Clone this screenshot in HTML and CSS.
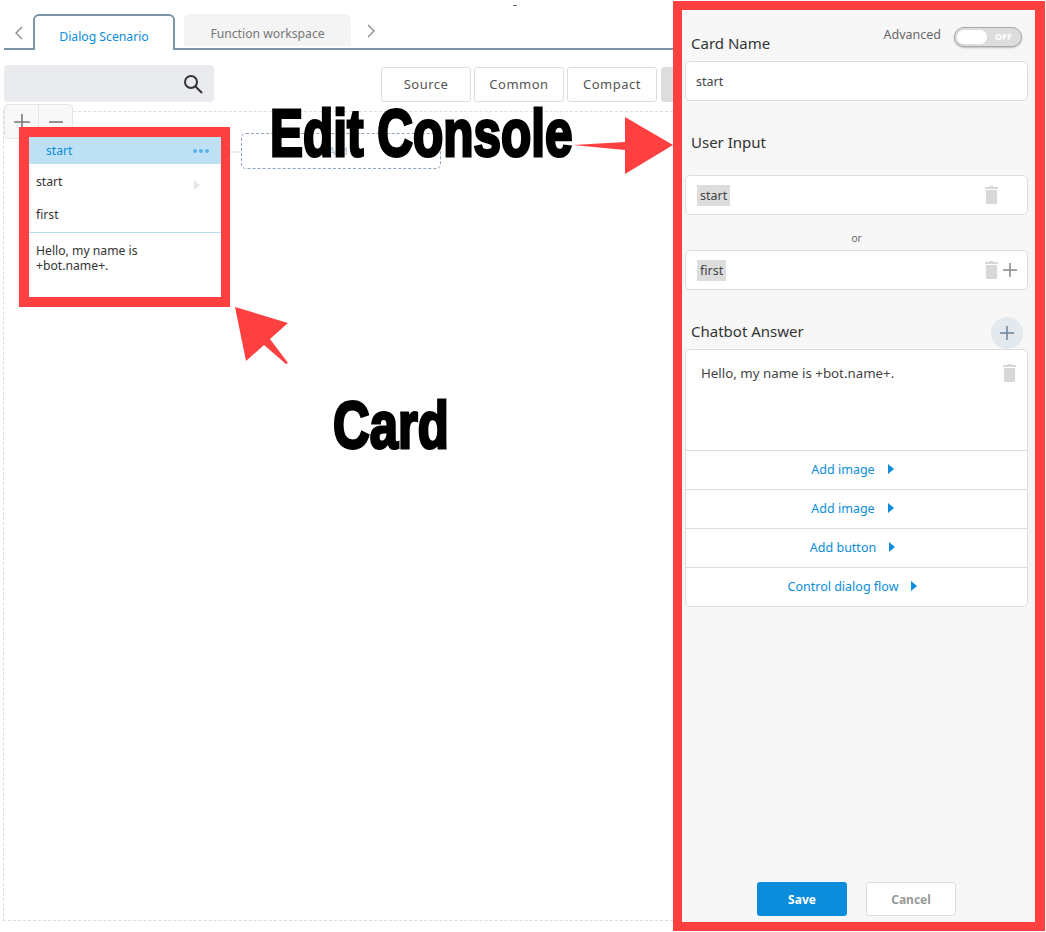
FILE: index.html
```html
<!DOCTYPE html>
<html lang="en">
<head>
    <meta charset="UTF-8">
    <title>Dialog Scenario</title>
    <link rel="stylesheet" href="styles.css">
</head>
<body>
    <div class="page">
        <div class="workspace">
            <div class="tabs">
                <svg class="chevron" width="10" height="16" viewBox="0 0 10 16"><path d="M8 2 2 8l6 6"/></svg>
                <div class="tab tab-active">Dialog Scenario</div>
                <div class="tab">Function workspace</div>
                <svg class="chevron chevron-next" width="10" height="16" viewBox="0 0 10 16"><path d="M2 2l6 6-6 6"/></svg>
            </div>

            <div class="toolbar">
                <div class="search">
                    <svg width="20" height="20" viewBox="0 0 20 20"><circle cx="8" cy="8" r="6"/><path d="M12.5 12.5 19 19"/></svg>
                </div>
                <div class="view-buttons">
                    <button class="view-btn">Source</button>
                    <button class="view-btn">Common</button>
                    <button class="view-btn">Compact</button>
                    <button class="view-btn view-btn-on"></button>
                </div>
            </div>

            <div class="canvas">
                <div class="zoom-ctrl">
                    <span class="zoom-btn"><svg width="16" height="16" viewBox="0 0 16 16"><path d="M8 0v16M0 8h16"/></svg></span>
                    <span class="zoom-btn"><svg width="16" height="16" viewBox="0 0 16 16"><path d="M1 8h14"/></svg></span>
                </div>

                <div class="link-line"></div>
                <div class="add-card">Add</div>

                <div class="card">
                    <div class="card-head">
                        <span>start</span>
                        <span class="dots"><i></i><i></i><i></i></span>
                    </div>
                    <div class="card-inputs">
                        <div class="card-input">start <span class="mini-arrow"></span></div>
                        <div class="card-input">first</div>
                    </div>
                    <div class="card-answer">Hello, my name is<br>+bot.name+.</div>
                </div>
            </div>
        </div>

        <div class="console">
            <div class="name-row">
                <h3>Card Name</h3>
                <div class="advanced">
                    <span class="advanced-label">Advanced</span>
                    <span class="toggle"><i class="knob"></i><b>OFF</b></span>
                </div>
            </div>
            <div class="field">start</div>

            <h3 class="input-title">User Input</h3>
            <div class="field field-input">
                <span class="tag">start</span>
                <svg class="trash" width="13" height="18" viewBox="0 0 14 18" preserveAspectRatio="none"><path d="M5 0h4v1h5v2H0V1h5zM1 4h12v12.500a1.500 1.500 0 0 1-1.500 1.500h-9A1.500 1.500 0 0 1 1 16.500z"/></svg>
            </div>
            <div class="or">or</div>
            <div class="field field-input">
                <span class="tag">first</span>
                <svg class="trash" width="13" height="18" viewBox="0 0 14 18" preserveAspectRatio="none"><path d="M5 0h4v1h5v2H0V1h5zM1 4h12v12.500a1.500 1.500 0 0 1-1.500 1.500h-9A1.500 1.500 0 0 1 1 16.500z"/></svg>
                <svg class="plus" width="14" height="14" viewBox="0 0 14 14"><path d="M7 0v14M0 7h14"/></svg>
            </div>

            <div class="answer-title">
                <h3>Chatbot Answer</h3>
                <span class="round-plus"><svg class="plus" width="14" height="14" viewBox="0 0 14 14"><path d="M7 0v14M0 7h14"/></svg></span>
            </div>
            <div class="answer-box">
                <div class="answer-text">
                    Hello, my name is +bot.name+.
                    <svg class="trash" width="13" height="18" viewBox="0 0 14 18" preserveAspectRatio="none"><path d="M5 0h4v1h5v2H0V1h5zM1 4h12v12.500a1.500 1.500 0 0 1-1.500 1.500h-9A1.500 1.500 0 0 1 1 16.500z"/></svg>
                </div>
                <div class="answer-row">Add image <i class="tri"></i></div>
                <div class="answer-row">Add image <i class="tri"></i></div>
                <div class="answer-row">Add button <i class="tri"></i></div>
                <div class="answer-row">Control dialog flow <i class="tri"></i></div>
            </div>

            <div class="actions">
                <button class="btn-save">Save</button>
                <button class="btn-cancel">Cancel</button>
            </div>
        </div>

        <!-- annotations drawn on top of the screenshot -->
        <span class="top-mark"></span>
        <svg class="arrows" width="1046" height="932" viewBox="0 0 1046 932">
            <path d="M573 145 625 142V117L673 145 625 174V150z"/>
            <path d="M235 307 288 323 270 339 288 363 286 364 264 345 246 361z"/>
        </svg>
        <div class="note note-console">Edit Console</div>
        <div class="note note-card">Card</div>
    </div>
</body>
</html>
```

FILE: styles.css
```css
* {
    box-sizing: border-box;
}
body {
    margin: 0;
    font-family: "Noto Sans", "Open Sans", sans-serif;
    color: #333;
    background: #fff;
}
h3 {
    margin: 0;
    font-size: 15px;
    font-weight: 400;
    line-height: 20px;
    color: #333;
}
button {
    font-family: inherit;
}

.page {
    position: relative;
    display: flex;
    width: 1046px;
    height: 932px;
    overflow: hidden;
}

/* left side */
.workspace {
    width: 673px;
    flex: none;
}
.tabs {
    display: flex;
    align-items: flex-end;
    height: 50px;
    margin-left: 4px;
    padding-top: 14px;
    border-bottom: 2px solid #7a94a8;
}
.chevron {
    align-self: center;
    margin: 4px 9px 0 10px;
    fill: none;
    stroke: #888;
    stroke-width: 1.3;
}
.chevron-next {
    margin: 0 0 0 15px;
}
.tab {
    width: 167px;
    height: 32px;
    margin: 0 0 2px 9px;
    padding-top: 11px;
    background: #f4f4f4;
    border-radius: 6px 6px 0 0;
    text-align: center;
    font-size: 12.2px;
    color: #777;
}
.tab-active {
    position: relative;
    width: 142px;
    height: 36px;
    margin: 0 0 -2px 0;
    padding-top: 12px;
    background: #fff;
    border: 2px solid #7a94a8;
    border-bottom: 0;
    color: #0b8ddb;
}

.toolbar {
    display: flex;
    justify-content: space-between;
    height: 61px;
    padding: 15px 0 0 4px;
}
.search {
    display: flex;
    align-items: center;
    justify-content: flex-end;
    width: 210px;
    height: 37px;
    padding-right: 11px;
    background: #e9ebef;
    border-radius: 4px;
}
.search svg {
    fill: none;
    stroke: #333;
    stroke-width: 2;
}
.view-buttons {
    display: flex;
    gap: 3px;
    padding-top: 2px;
}
.view-btn {
    width: 90px;
    height: 35px;
    padding: 0 0 2px;
    background: #fff;
    border: 1px solid #ddd;
    border-radius: 3px;
    font-size: 13px;
    letter-spacing: 0.5px;
    color: #555;
}
.view-btn-on {
    width: 12px;
    margin-left: 1px;
    background: #ddd;
    border-radius: 3px 0 0 3px;
}

.canvas {
    position: relative;
    height: 810px;
    margin-left: 3px;
    border: 1px dashed #ddd;
    border-right: 0;
}
.zoom-ctrl {
    position: absolute;
    left: 0;
    top: -8px;
    display: flex;
    width: 69px;
    height: 35px;
    background: #f8f8f8;
    border: 1px solid #e5e5e5;
    border-radius: 4px;
}
.zoom-btn {
    flex: 1;
    padding-top: 8px;
    text-align: center;
}
.zoom-btn svg {
    fill: none;
    stroke: #777;
    stroke-width: 1.6;
}
.zoom-btn + .zoom-btn {
    border-left: 1px solid #e5e5e5;
}
.link-line {
    position: absolute;
    left: 226px;
    top: 39px;
    width: 12px;
    height: 2px;
    background: #eee;
}
.add-card {
    position: absolute;
    left: 237px;
    top: 21px;
    width: 200px;
    height: 36px;
    padding: 10px 6px 0 0;
    border: 1px dashed #8fa5bd;
    border-radius: 5px;
    text-align: center;
    font-size: 10px;
    color: #a9bbd0;
}
.card {
    position: absolute;
    left: 15px;
    top: 15px;
    width: 211px;
    height: 180px;
    background: #fff;
    border: 10px solid #ff4040;
    border-right-width: 9px;
    font-size: 12.2px;
    color: #333;
}
.card-head {
    display: flex;
    align-items: center;
    justify-content: space-between;
    height: 27px;
    padding: 0 12px 0 17px;
    background: #bde0f5;
    color: #0b8ddb;
}
.dots {
    display: flex;
    gap: 2px;
}
.dots i {
    width: 4px;
    height: 4px;
    border-radius: 50%;
    background: #5cb3ea;
}
.card-inputs {
    height: 69px;
    border-bottom: 1px solid #b5dcf3;
}
.card-input {
    position: relative;
    height: 33px;
    padding: 9px 7px 0;
}
.mini-arrow {
    position: absolute;
    right: 21px;
    top: 16px;
    border-left: 6px solid #e6e6e6;
    border-top: 5px solid transparent;
    border-bottom: 5px solid transparent;
}
.card-answer {
    padding: 10px 7px 0;
    line-height: 15px;
}

/* edit console */
.console {
    position: relative;
    width: 372px;
    height: 930px;
    margin-top: 1px;
    padding: 9px 7px 0 9px;
    background: #f7f7f7;
    border: 9px solid #ff4040;
    border-right-width: 10px;
}
.name-row {
    display: flex;
    justify-content: space-between;
    height: 42px;
    padding: 14px 6px 0 0;
}
.advanced {
    display: flex;
    align-items: flex-start;
    gap: 13px;
    margin-top: -6px;
    font-size: 12.5px;
    line-height: 18px;
    color: #666;
}
.advanced-label {
    margin-top: -1px;
}
.toggle {
    position: relative;
    display: block;
    width: 68px;
    height: 20px;
    background: #ddd;
    border: 1px solid #aaa;
    border-radius: 10px;
    box-shadow: 0 1px 2px #bbb;
}
.knob {
    position: absolute;
    left: 2px;
    top: 2px;
    width: 30px;
    height: 14px;
    background: #fff;
    border-radius: 7px;
}
.toggle b {
    position: absolute;
    right: 9px;
    top: 0;
    font-size: 9px;
    color: #fff;
}
.field {
    display: flex;
    align-items: center;
    position: relative;
    width: 343px;
    height: 40px;
    margin-left: -6px;
    padding-left: 10px;
    background: #fff;
    border: 1px solid #ddd;
    border-radius: 5px;
    font-size: 12.5px;
    color: #444;
}
.input-title {
    margin-top: 31px;
    margin-bottom: 23px;
}
.field-input {
    padding-left: 11px;
}
.tag {
    padding: 2px 3px;
    background: #ddd;
}
.field .trash {
    position: absolute;
    right: 29px;
    top: 10px;
}
.trash {
    fill: #d8d8d8;
}
.plus {
    fill: none;
    stroke: #888;
    stroke-width: 1.5;
}
.field .plus {
    position: absolute;
    right: 10px;
    top: 12px;
}
.or {
    width: 343px;
    height: 35px;
    margin-left: -6px;
    padding-top: 16px;
    text-align: center;
    font-size: 10px;
    color: #666;
}
.answer-title {
    display: flex;
    justify-content: space-between;
    height: 32px;
    margin-top: 27px;
}
.answer-title h3 {
    padding-top: 4px;
}
.round-plus {
    display: flex;
    align-items: center;
    justify-content: center;
    width: 32px;
    height: 32px;
    margin-right: 5px;
    background: #e4e9ee;
    border-radius: 50%;
}
.round-plus .plus {
    stroke: #6b8299;
}
.answer-box {
    width: 343px;
    margin-left: -6px;
    background: #fff;
    border: 1px solid #ddd;
    border-radius: 5px;
}
.answer-text {
    position: relative;
    height: 100px;
    padding: 14px 15px;
    font-size: 13.3px;
    color: #444;
}
.answer-text .trash {
    position: absolute;
    right: 11px;
    top: 14px;
}
.answer-row {
    display: flex;
    align-items: center;
    justify-content: center;
    gap: 13px;
    height: 39px;
    padding: 0 8px 2px 0;
    border-top: 1px solid #ddd;
    font-size: 12.5px;
    color: #0b8ddb;
}
.tri {
    border-left: 6px solid #0b8ddb;
    border-top: 5px solid transparent;
    border-bottom: 5px solid transparent;
}
.actions {
    position: absolute;
    left: 75px;
    bottom: 6px;
    display: flex;
    gap: 19px;
}
.actions button {
    width: 90px;
    height: 34px;
    padding: 0;
    border-radius: 3px;
    font-size: 12px;
    font-weight: 700;
}
.btn-save {
    background: #0b8ddb;
    border: 0;
    color: #fff;
}
.btn-cancel {
    background: #fff;
    border: 1px solid #ddd;
    color: #999;
}

/* annotations */
.top-mark {
    position: absolute;
    left: 513px;
    top: 5px;
    width: 4px;
    height: 1px;
    background: #666;
}
.arrows {
    position: absolute;
    left: 0;
    top: 0;
    fill: #ff4040;
}
.note {
    position: absolute;
    font-family: "Liberation Sans", sans-serif;
    font-size: 66px;
    font-weight: 700;
    line-height: 66px;
    color: #000;
    -webkit-text-stroke: 3px #000;
    white-space: nowrap;
    transform-origin: left center;
}
.note-console {
    left: 270px;
    top: 100px;
    transform: scaleX(0.75);
}
.note-card {
    left: 333px;
    top: 392px;
    transform: scaleX(0.77);
}
```
